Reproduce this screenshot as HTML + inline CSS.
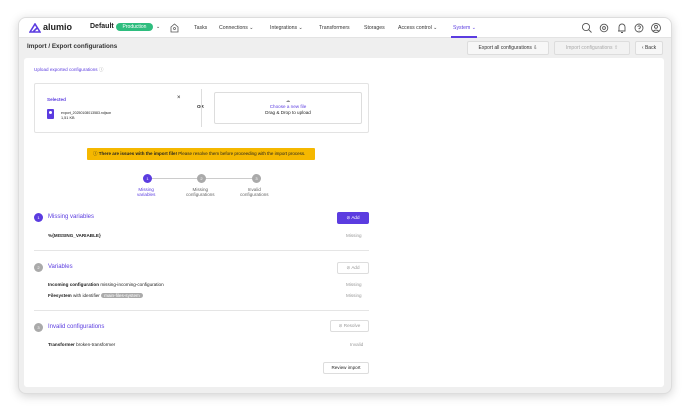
<!DOCTYPE html>
<html><head><meta charset="utf-8"><style>
*{margin:0;padding:0;box-sizing:border-box}
body{width:690px;height:411px;background:#fff;font-family:"Liberation Sans",sans-serif;position:relative;overflow:hidden;color:#222}
.a{position:absolute;white-space:nowrap}
.win{position:absolute;left:18px;top:17px;width:654px;height:377px;border-radius:8px;background:#efefef;box-shadow:0 2px 10px rgba(0,0,0,.18);border:1px solid #ddd;overflow:hidden}
.nav{position:absolute;left:0;top:0;width:100%;height:20px;background:#fff;border-bottom:1px solid #e3e3e3}
.n{font-size:5.2px;color:#333;top:7px}
.btn{position:absolute;border:1px solid #ddd;border-radius:2px;background:#f7f7f7;font-size:5px;text-align:center}
.card{position:absolute;left:5px;top:40px;width:640px;height:329px;background:#fff;border-radius:3px}
.p{color:#5b3ce0}
.s{font-size:4.6px}
.c{position:absolute;width:9px;height:9px;border-radius:50%;color:#fff;font-size:4px;text-align:center;line-height:9px}
</style></head><body>
<div class="win">
 <div class="nav">
  <svg class="a" style="left:10px;top:5px" width="12" height="10" viewBox="0 0 12 10"><path d="M1 9L6 1L11 9Z M4 9L8 5" stroke="#5b3ce0" stroke-width="1.6" fill="none"/></svg>
  <div class="a" style="left:24px;top:4px;font-size:9px;color:#222;font-weight:bold">alumio</div>
  <div class="a" style="left:71px;top:5px;font-size:7px;font-weight:bold">Default</div>
  <div class="a" style="left:97px;top:5px;width:37px;height:8px;border-radius:4px;background:#2ebd7e;color:#fff;font-size:5px;text-align:center;line-height:8px">Production</div>
  <div class="a n" style="left:137px;top:6px">⌄</div>
  <svg class="a" style="left:151px;top:5px" width="9" height="10"><path d="M1 4L4.5 1L8 4V9H1Z" stroke="#555" stroke-width=".8" fill="none"/><circle cx="4.5" cy="5.5" r="1" stroke="#555" stroke-width=".7" fill="none"/></svg>
  <div class="a n" style="left:175px">Tasks</div>
  <div class="a n" style="left:200px">Connections ⌄</div>
  <div class="a n" style="left:251px">Integrations ⌄</div>
  <div class="a n" style="left:300px">Transformers</div>
  <div class="a n" style="left:345px">Storages</div>
  <div class="a n" style="left:379px">Access control ⌄</div>
  <div class="a n" style="left:434px;color:#5b3ce0">System ⌄</div>
  <div class="a" style="left:432px;top:18px;width:26px;height:1.5px;background:#5b3ce0"></div>
  <svg class="a" style="left:562px;top:4px" width="90" height="12"><g stroke="#555" stroke-width=".9" fill="none"><circle cx="5" cy="5" r="3.6"/><path d="M7.6 7.6L10.5 10.5"/><circle cx="23" cy="6" r="3.8"/><circle cx="23" cy="6" r="1.4"/><path d="M38 9V5a3 3 0 0 1 6 0v4H37M40 10.5h2"/><circle cx="58" cy="6" r="4"/><path d="M56.8 4.8a1.3 1.3 0 1 1 1.3 1.6v.8M58.1 8.4v.3"/><circle cx="75" cy="6" r="4.5"/><circle cx="75" cy="4.8" r="1.5"/><path d="M72 9.5a3.5 3 0 0 1 6 0"/></g></svg>
 </div>
 <div class="a" style="left:8px;top:25px;font-size:6.3px;font-weight:bold;color:#333">Import / Export configurations</div>
 <div class="btn" style="left:448px;top:23px;width:82px;height:14px;line-height:12px;color:#333">Export all configurations ⇩</div>
 <div class="btn" style="left:535px;top:23px;width:76px;height:14px;line-height:12px;color:#aaa;background:#f2f2f2">Import configurations ⇧</div>
 <div class="btn" style="left:616px;top:23px;width:28px;height:14px;line-height:12px;color:#333">‹ Back</div>
 <div class="card">
  <div class="a p s" style="left:10px;top:9px">Upload exported configurations <span style="color:#999">ⓘ</span></div>
  <div class="a" style="left:10px;top:25px;width:335px;height:50px;border:1px solid #e3e3e3;border-radius:2px"></div>
  <div class="a p s" style="left:23px;top:39px;font-weight:bold">Selected</div>
  <div class="a" style="left:153px;top:37px;font-size:6px">×</div>
  <div class="a" style="left:23px;top:51px;width:7px;height:10px;background:#5b3ce0;border-radius:1px"></div>
  <div class="a" style="left:25px;top:53px;width:3px;height:3px;background:#fff;border-radius:50%"></div>
  <div class="a" style="left:37px;top:53px;font-size:3.5px">export_20250108013583.ndjson</div>
  <div class="a" style="left:37px;top:58px;font-size:3.8px">1,51 KB</div>
  <div class="a" style="left:173px;top:46px;font-size:4.5px;font-weight:bold">OR</div>
  <div class="a" style="left:177px;top:31px;width:1px;height:38px;background:#ddd"></div>
  <div class="a" style="left:190px;top:34px;width:148px;height:32px;border:1px solid #ddd;border-radius:2px;text-align:center;font-size:4.6px;padding-top:5px;line-height:6px"><span style="color:#888">☁</span><br><span class="p">Choose a new file</span><br>Drag &amp; Drop to upload</div>
  <div class="a" style="left:63px;top:90px;width:228px;height:12px;background:#f5b800;border-radius:1px;font-size:4.5px;line-height:12px;padding-left:6px">ⓘ <b>There are issues with the import file!</b> Please resolve them before proceeding with the import process.</div>
  <div class="a" style="left:127px;top:120px;width:110px;height:.8px;background:#ccc"></div>
  <div class="c" style="left:119px;top:116px;background:#5b3ce0">1</div>
  <div class="c" style="left:173px;top:116px;background:#aaa">2</div>
  <div class="c" style="left:228px;top:116px;background:#aaa">3</div>
  <div class="a p s" style="left:113px;top:129px;text-align:center;line-height:5px">Missing<br>variables</div>
  <div class="a s" style="left:162px;top:129px;text-align:center;line-height:5px;color:#666">Missing<br>configurations</div>
  <div class="a s" style="left:216px;top:129px;text-align:center;line-height:5px;color:#666">Invalid<br>configurations</div>

  <div class="c" style="left:10px;top:155px;background:#5b3ce0">1</div>
  <div class="a p" style="left:24px;top:156px;font-size:6px">Missing variables</div>
  <div class="a" style="left:313px;top:154px;width:32px;height:12px;background:#5b3ce0;border-radius:2px;color:#fff;font-size:4.6px;text-align:center;line-height:12px">⊘ Add</div>
  <div class="a s" style="left:24px;top:175px;font-weight:bold">%{MISSING_VARIABLE}</div>
  <div class="a s" style="left:322px;top:175px;color:#999">Missing</div>
  <div class="a" style="left:10px;top:192px;width:335px;height:1px;background:#e5e5e5"></div>

  <div class="c" style="left:10px;top:205px;background:#aaa">2</div>
  <div class="a p" style="left:24px;top:206px;font-size:6px">Variables</div>
  <div class="a" style="left:313px;top:204px;width:32px;height:12px;border:1px solid #ddd;border-radius:2px;color:#999;font-size:4.6px;text-align:center;line-height:10px">⊘ Add</div>
  <div class="a s" style="left:24px;top:224px"><b>Incoming configuration</b> missing-incoming-configuration</div>
  <div class="a s" style="left:322px;top:224px;color:#999">Missing</div>
  <div class="a s" style="left:24px;top:235px"><b>Filesystem</b> with identifier <span style="background:#aaa;color:#fff;border-radius:3px;padding:0 3px">main-files-system</span></div>
  <div class="a s" style="left:322px;top:235px;color:#999">Missing</div>
  <div class="a" style="left:10px;top:252px;width:335px;height:1px;background:#e5e5e5"></div>

  <div class="c" style="left:10px;top:265px;background:#aaa">3</div>
  <div class="a p" style="left:24px;top:266px;font-size:6px">Invalid configurations</div>
  <div class="a" style="left:306px;top:262px;width:39px;height:12px;border:1px solid #ddd;border-radius:2px;color:#999;font-size:4.6px;text-align:center;line-height:10px">⊘ Resolve</div>
  <div class="a s" style="left:24px;top:284px"><b>Transformer</b> broken-transformer</div>
  <div class="a s" style="left:326px;top:284px;color:#999">Invalid</div>
  <div class="a" style="left:299px;top:304px;width:46px;height:12px;border:1px solid #ddd;border-radius:2px;font-size:4.6px;text-align:center;line-height:10px">Review import</div>
 </div>
</div>
</body></html>
